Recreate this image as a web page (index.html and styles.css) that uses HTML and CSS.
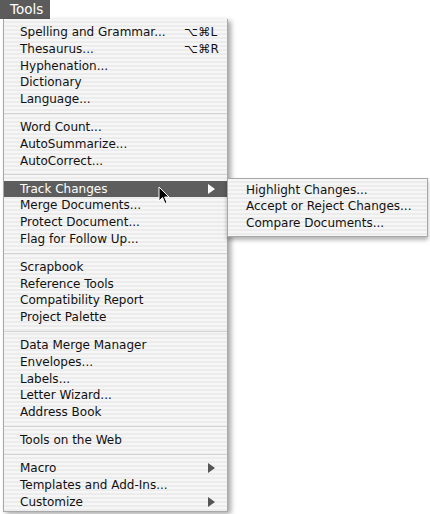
FILE: index.html
```html
<!DOCTYPE html>
<html>
<head>
<meta charset="utf-8">
<link rel="stylesheet" href="styles.css">
</head>
<body>
<div class="screen">
  <div class="tab">Tools</div>
  <div class="menu">
    <div class="item"><span>Spelling and Grammar...</span><span class="key">⌥⌘L</span></div>
    <div class="item"><span>Thesaurus...</span><span class="key">⌥⌘R</span></div>
    <div class="item"><span>Hyphenation...</span></div>
    <div class="item"><span>Dictionary</span></div>
    <div class="item"><span>Language...</span></div>
    <div class="sep"></div>
    <div class="item"><span>Word Count...</span></div>
    <div class="item"><span>AutoSummarize...</span></div>
    <div class="item"><span>AutoCorrect...</span></div>
    <div class="sep"></div>
    <div class="item active"><span>Track Changes</span><span class="arrow"></span>
      <svg class="cursor" width="12" height="19" viewBox="0 0 12 19"><path d="M1 1 L1 15 L4.5 11.5 L7 17.5 L9 16.6 L6.6 11 L11 11 Z" fill="#000" stroke="#fff" stroke-width="1"/></svg>
      <div class="submenu">
        <div class="item"><span>Highlight Changes...</span></div>
        <div class="item"><span>Accept or Reject Changes...</span></div>
        <div class="item"><span>Compare Documents...</span></div>
      </div>
    </div>
    <div class="item"><span>Merge Documents...</span></div>
    <div class="item"><span>Protect Document...</span></div>
    <div class="item"><span>Flag for Follow Up...</span></div>
    <div class="sep"></div>
    <div class="item"><span>Scrapbook</span></div>
    <div class="item"><span>Reference Tools</span></div>
    <div class="item"><span>Compatibility Report</span></div>
    <div class="item"><span>Project Palette</span></div>
    <div class="sep"></div>
    <div class="item"><span>Data Merge Manager</span></div>
    <div class="item"><span>Envelopes...</span></div>
    <div class="item"><span>Labels...</span></div>
    <div class="item"><span>Letter Wizard...</span></div>
    <div class="item"><span>Address Book</span></div>
    <div class="sep"></div>
    <div class="item"><span>Tools on the Web</span></div>
    <div class="sep"></div>
    <div class="item"><span>Macro</span><span class="arrow"></span></div>
    <div class="item"><span>Templates and Add-Ins...</span></div>
    <div class="item"><span>Customize</span><span class="arrow"></span></div>
  </div>
</div>
</body>
</html>
```
FILE: styles.css
```css
html, body {
  margin: 0;
  padding: 0;
  background: #ffffff;
}
.screen {
  width: 430px;
  height: 514px;
  position: relative;
  overflow: hidden;
  font-family: "DejaVu Sans", "Liberation Sans", sans-serif;
  font-size: 12px;
  color: #111;
}
.tab {
  width: 40px;
  height: 19px;
  line-height: 19px;
  padding-left: 10px;
  background: #5b5b5b;
  color: #fff;
  font-size: 13.5px;
}
.menu {
  margin-left: 3px;
  width: 223px;
  padding: 5px 0 1px;
  border: 1px solid #a8a8a8;
  border-top: none;
  background: repeating-linear-gradient(to bottom, #f6f6f6 0px, #f6f6f6 2px, #ececec 2px, #ececec 4px);
  box-shadow: 3px 2px 5px rgba(0,0,0,0.35);
  position: relative;
}
.item {
  height: 16.75px;
  line-height: 16.75px;
  padding: 0 11px 0 16px;
  display: flex;
  justify-content: space-between;
  align-items: center;
  position: relative;
  white-space: nowrap;
}
.key {
  width: 30px;
  letter-spacing: 0.3px;
  padding-right: 2px;
}
.arrow {
  width: 0;
  height: 0;
  border-top: 5px solid transparent;
  border-bottom: 5px solid transparent;
  border-left: 7px solid #555;
  margin-right: 1px;
}
.active {
  background: #5d5d5d;
  color: #fff;
}
.active .arrow {
  border-left-color: #fff;
}
.sep {
  height: 11.25px;
  position: relative;
}
.sep::after {
  content: "";
  position: absolute;
  left: 0;
  right: 0;
  top: 5px;
  height: 1px;
  background: #d4d4d4;
}
.cursor {
  position: absolute;
  left: 154px;
  top: 5px;
}
.submenu {
  position: absolute;
  left: 223px;
  top: -3px;
  width: 199px;
  padding: 3px 0 4px;
  background: repeating-linear-gradient(to bottom, #f6f6f6 0px, #f6f6f6 2px, #ececec 2px, #ececec 4px);
  border: 1px solid #a8a8a8;
  box-shadow: 0 3px 4px rgba(0,0,0,0.3);
  color: #111;
}
.submenu .item {
  padding-left: 18px;
}
```
